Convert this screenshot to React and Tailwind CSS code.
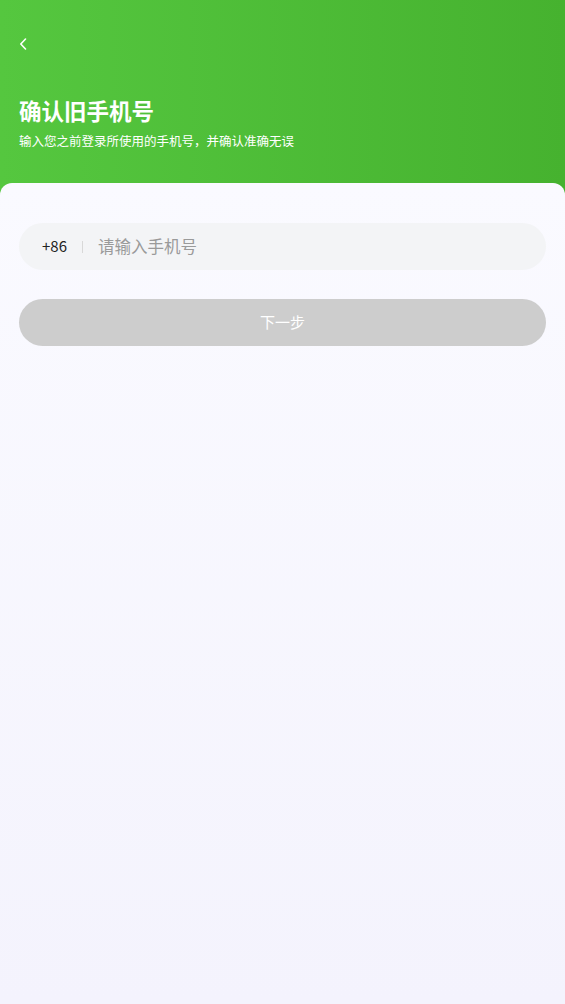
export default function App() {
  return (
    <div
      className="min-h-[1004px] w-full flex flex-col bg-[#52c23b]"
      style={{ fontFamily: '"Noto Sans CJK SC", "Noto Sans", sans-serif' }}
    >
      {/* Header */}
      <div className="h-[195px] bg-gradient-to-r from-[#55c73f] to-[#46b22f] px-[19px] pt-[37px] text-white">
        <button className="w-[12px] h-[14px] flex items-center">
          <svg width="8" height="12" viewBox="0 0 8 12" fill="none">
            <path d="M6.5 1L1.8 6l4.7 5" stroke="#fff" strokeWidth="1.6" strokeLinecap="round" strokeLinejoin="round" />
          </svg>
        </button>
        <h1 className="mt-[44px] text-[22.5px] leading-[30px] font-bold">确认旧手机号</h1>
        <p className="mt-[7px] text-[12.5px] leading-[18px]">输入您之前登录所使用的手机号，并确认准确无误</p>
      </div>

      {/* Card */}
      <div className="-mt-[12px] flex-1 rounded-t-[12px] bg-gradient-to-b from-[#fafaff] to-[#f4f3fd] px-[19px] pt-[40px]">
        <div className="h-[47px] rounded-full bg-[#f3f4f6] flex items-center pl-[23px]">
          <span className="text-[15px] text-[#222]">+86</span>
          <span className="mx-[15px] w-px h-[12px] bg-[#d8d8d8]" />
          <input
            className="flex-1 bg-transparent outline-none text-[16.5px] text-[#333] placeholder-[#9a9a9a]"
            placeholder="请输入手机号"
          />
        </div>
        <button className="mt-[29px] w-full h-[47px] rounded-full bg-[#cdcdcd] text-white text-[15px]">
          下一步
        </button>
      </div>
    </div>
  );
}
